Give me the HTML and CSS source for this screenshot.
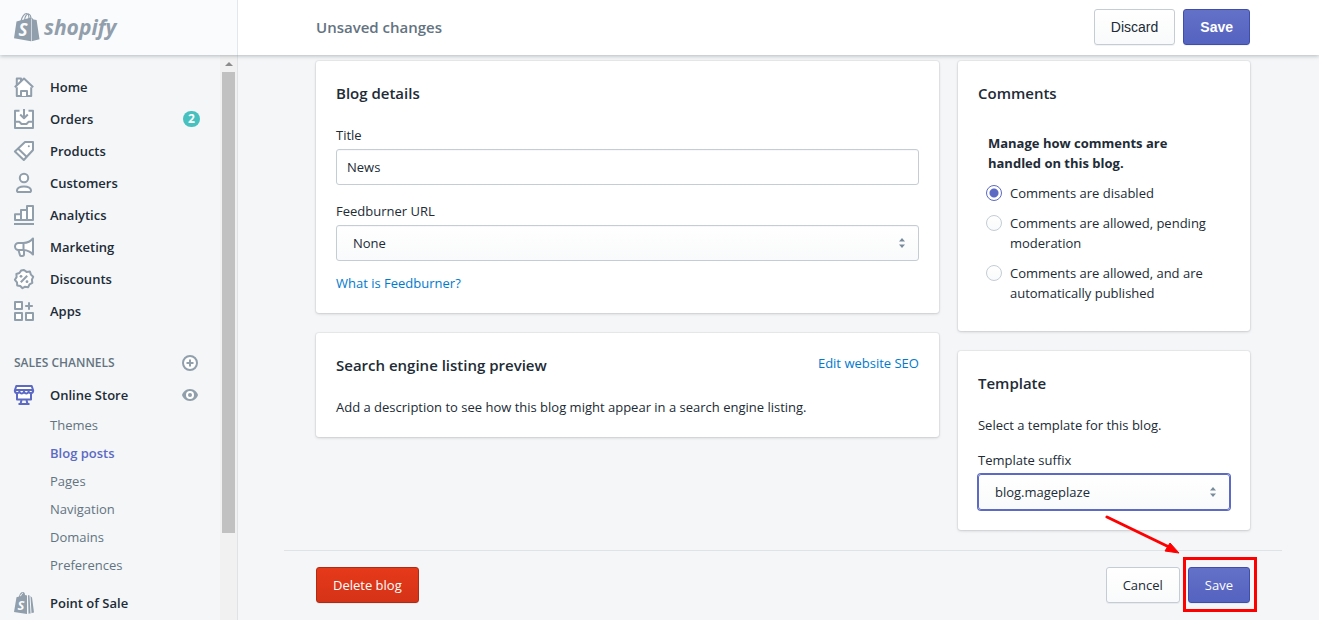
FILE: index.html
```html
<!DOCTYPE html>
<html lang="en">
<head>
<meta charset="utf-8">
<meta name="viewport" content="width=device-width, initial-scale=1">
<title>News - Blog</title>
<link rel="stylesheet" href="styles.css">
</head>
<body>
<div class="frame">
  <header class="topbar">
    <a class="brand" href="#" aria-label="Shopify">
      <svg class="brand-mark" viewBox="0 0 26 30" aria-hidden="true">
        <path d="M7 9C8 4.500 10.500 1.500 12.500 1.500S15 4 15 7.500M10.500 8C11 4 13 1.500 14.500 2S17 4.500 17 7" fill="none" stroke="#919eab" stroke-width="1.100"/>
        <path d="M2.500 9.500 17 5.500V29.300L0 26.200Z" fill="#919eab"/>
        <path d="M17.600 5.500 19.500 7.500 22.600 8 25.500 27.300 17.600 29.300Z" fill="#919eab"/>
        <text class="mark-letter" x="4.500" y="24">S</text>
      </svg>
      <span class="brand-name">shopify</span>
    </a>
    <div class="savebar">
      <h2 class="savebar-title">Unsaved changes</h2>
      <div class="savebar-actions">
        <button class="btn btn-top" type="button">Discard</button>
        <button class="btn btn-top btn-primary btn-strong" type="button">Save</button>
      </div>
    </div>
  </header>

  <aside class="sidebar">
    <nav class="nav" aria-label="Main">
      <ul class="list">
        <li><a class="item" href="#"><svg class="icon" viewBox="0 0 20 20"><path class="s" d="M2.800 9V1.500H7V5M2.800 9V19H17.200V9"/><path class="s" d="M.8 10.200 10 1.500 19.200 10.200"/><path class="s" d="M7 19V14H13V19"/></svg>Home</a></li>
        <li><a class="item" href="#"><svg class="icon" viewBox="0 0 20 20"><path class="s" d="M5.500 1.800H1V19H19V1.800H14.500"/><path class="s" d="M1 12.800H5.500L7.500 15H12.500L14.500 12.800H19M10 0V9M6.200 5.600 10 9.200 13.800 5.600"/></svg>Orders<span class="badge">2</span></a></li>
        <li><a class="item" href="#"><svg class="icon" viewBox="0 0 20 20"><path class="s" d="M11 1H19V9L9.800 19 .9 10.500Z"/><path class="s" d="M4 7.500 12.600 15.800"/><circle cx="14.800" cy="5.200" r="1" fill="#919eab"/></svg>Products</a></li>
        <li><a class="item" href="#"><svg class="icon" viewBox="0 0 20 20"><circle class="s" cx="10" cy="5" r="4.200"/><path class="s" d="M4.500 19C3.400 19 2.800 18.300 3 17.200 3.500 14.500 6.800 13.500 10 13.500S16.500 14.500 17 17.200C17.200 18.300 16.600 19 15.500 19Z"/></svg>Customers</a></li>
        <li><a class="item" href="#"><svg class="icon" viewBox="0 0 20 20"><path class="s" d="M1 15V9.200H7V15ZM7 15V5H13V15ZM13 15V1H19V15Z"/><path class="s" d="M0 19H20"/></svg>Analytics</a></li>
        <li><a class="item" href="#"><svg class="icon" viewBox="0 0 20 20"><path class="s" d="M4 11.500 6 18.200C6.300 19.400 10 19.400 10 17.500V11.500Z"/><path class="s" d="M9.500 6H4.500A3.500 3.500 0 0 0 4.500 13H9.500C13.500 13.200 16.500 14.500 19 17.500V1.500C16.500 4.500 13.500 5.800 9.500 6ZM9.500 6V13"/></svg>Marketing</a></li>
        <li><a class="item" href="#"><svg class="icon" viewBox="0 0 20 20"><path class="s" d="M10 1 12.500 2.900 15.900 2.500 16.900 5.600 19.200 7.800 17.900 10.700 18.300 13.800 15.500 15.300 14.200 18.200 11.100 17.700 8.500 19.200 6.300 17 3.200 16.400 3 13.300.9 10.800 2.600 8.100 2.400 5 5.400 4 7.100 1.600Z"/><path class="s" d="M6.800 13.200 13.200 6.800"/><circle cx="7" cy="7.300" r="1.400" fill="#919eab"/><circle cx="13" cy="12.700" r="1.400" fill="#919eab"/></svg>Discounts</a></li>
        <li><a class="item" href="#"><svg class="icon" viewBox="0 0 20 20"><path class="s" d="M1 1H8V8H1ZM1 12H8V19H1ZM12 12H19V19H12Z"/><path class="s" d="M15 1.200V8.800M11.200 5H18.800"/></svg>Apps</a></li>
      </ul>

      <div class="group-head">
        <h3 class="group-title">SALES CHANNELS</h3>
        <button class="icon-btn" type="button" aria-label="Add sales channel"><svg class="icon-small" viewBox="0 0 16 16"><circle class="s" cx="8" cy="8" r="7"/><path class="s" d="M8 4.500V11.500M4.500 8H11.500"/></svg></button>
      </div>

      <div class="row">
        <a class="item" href="#"><svg class="icon" viewBox="0 0 20 20"><g class="active"><path class="s" d="M3 7V14.500H17V7"/><path class="s" d="M2.300 1H17.700L19.200 5.500C19.200 8.500 15.500 9 14.600 6.500 13.500 9.300 11 9.300 10 6.500 9 9.300 6.500 9.300 5.400 6.500 4.500 9 .8 8.500.8 5.500Z"/><path class="s" d="M1 5H19M7.500 15 6.500 19M12.500 15 13.500 19M4.500 19H15.500"/></g></svg>Online Store</a>
        <button class="icon-btn" type="button" aria-label="View your online store"><svg class="icon-small" viewBox="0 0 16 16"><path fill="#919eab" d="M8 2C3.500 2 .8 5.500 0 8 .8 10.500 3.500 14 8 14S15.200 10.500 16 8C15.200 5.500 12.500 2 8 2Z"/><circle cx="8" cy="8" r="4" fill="#fff"/><circle cx="8" cy="8" r="2" fill="#919eab"/></svg></button>
      </div>
      <ul class="list">
        <li><a class="sub" href="#">Themes</a></li>
        <li><a class="sub sub-current" href="#" aria-current="page">Blog posts</a></li>
        <li><a class="sub" href="#">Pages</a></li>
        <li><a class="sub" href="#">Navigation</a></li>
        <li><a class="sub" href="#">Domains</a></li>
        <li><a class="sub" href="#">Preferences</a></li>
      </ul>
      <a class="item item-spaced" href="#"><svg class="icon icon-tall" viewBox="0 0 20 22"><path fill="#919eab" d="M2.500 5.200 5 4.500C5.500 2 7 0 8.800 0S11 1.500 11 3L13 3.500V22L0 20ZM14 3 16.200 4 18 5.500 20 20.500 14.500 21.800Z"/><path d="M6.500 4.200C7 2.500 8 1.200 9 1.200" stroke="#f4f6f8" fill="none"/><path d="M16 4 17 21" stroke="#f4f6f8" fill="none"/><text class="mark-letter mark-letter-small" x="3.500" y="17.500">S</text></svg>Point of Sale</a>
    </nav>
    <div class="scroll" aria-hidden="true">
      <span class="scroll-arrow"></span>
      <span class="scroll-thumb"></span>
    </div>
  </aside>

  <main class="main">
    <form class="columns">
      <div class="stack">
        <section class="card">
          <h2 class="card-title">Blog details</h2>
          <div class="field">
            <label for="title">Title</label>
            <input class="control" id="title" type="text" value="News">
          </div>
          <div class="field">
            <label for="feed">Feedburner URL</label>
            <div class="picker">
              <select class="control control-select" id="feed"><option>None</option></select>
              <svg class="carets" viewBox="0 0 6 10" aria-hidden="true"><path d="M0 3.600 3 0 6 3.600ZM0 6.400H6L3 10Z"/></svg>
            </div>
          </div>
          <a class="link help" href="#">What is Feedburner?</a>
        </section>
        <section class="card">
          <div class="card-head">
            <h2 class="card-title">Search engine listing preview</h2>
            <a class="link" href="#">Edit website SEO</a>
          </div>
          <p class="text">Add a description to see how this blog might appear in a search engine listing.</p>
        </section>
      </div>
      <div class="stack">
        <section class="card card-comments">
          <h2 class="card-title">Comments</h2>
          <fieldset class="choices">
            <legend class="legend">Manage how comments are handled on this blog.</legend>
            <label class="choice"><input class="radio" type="radio" name="comments" checked><span>Comments are disabled</span></label>
            <label class="choice"><input class="radio" type="radio" name="comments"><span>Comments are allowed, pending moderation</span></label>
            <label class="choice"><input class="radio" type="radio" name="comments"><span>Comments are allowed, and are automatically published</span></label>
          </fieldset>
        </section>
        <section class="card">
          <h2 class="card-title">Template</h2>
          <p class="text">Select a template for this blog.</p>
          <div class="field">
            <label for="suffix">Template suffix</label>
            <div class="picker">
              <select class="control control-select control-focus" id="suffix"><option>blog.mageplaze</option></select>
              <svg class="carets" viewBox="0 0 6 10" aria-hidden="true"><path d="M0 3.600 3 0 6 3.600ZM0 6.400H6L3 10Z"/></svg>
            </div>
          </div>
        </section>
      </div>
    </form>
    <div class="footer">
      <button class="btn btn-danger" type="button">Delete blog</button>
      <div class="footer-end">
        <button class="btn" type="button">Cancel</button>
        <div class="marked">
          <button class="btn btn-primary" type="button">Save</button>
          <svg class="pointer" viewBox="0 0 76 40" aria-hidden="true"><path d="M2 2 64 32" stroke="red" stroke-width="3" stroke-linecap="round"/><path d="M65 28 74 38 60 36Z" fill="red" stroke="red"/></svg>
        </div>
      </div>
    </div>
  </main>
</div>
</body>
</html>
```
FILE: styles.css
```css
* { box-sizing: border-box; }

body {
  margin: 0;
  background: #f4f6f8;
  color: #212b36;
  font: 13px/20px "Open Sans", "Noto Sans", sans-serif;
}

h2, h3, p, ul, fieldset, legend { margin: 0; padding: 0; border: 0; }
a { color: inherit; text-decoration: none; }
button, input, select { font: inherit; color: inherit; margin: 0; }

.frame {
  display: grid;
  grid-template: 55px minmax(0, 1fr) / 238px minmax(0, 1fr);
  height: 100vh;
  overflow: hidden;
}

.topbar {
  grid-column: 1 / -1;
  display: grid;
  grid-template-columns: subgrid;
  background: #fff;
  box-shadow: 0 1px 4px rgba(33, 43, 54, .3);
  z-index: 1;
}

.brand {
  display: flex;
  align-items: center;
  gap: 4px;
  padding: 0 0 2px 14px;
  background: #fafbfc;
  border-right: 1px solid #e3e7eb;
  color: #919eab;
}
.brand-mark { width: 26px; height: 30px; }
.mark-letter { fill: #fafbfc; font: italic 700 17px "Open Sans", sans-serif; }
.mark-letter-small { font-size: 13px; }
.brand-name { font-size: 21px; line-height: 28px; font-weight: 700; font-style: italic; }

.savebar {
  display: flex;
  align-items: center;
  justify-content: space-between;
  padding: 0 69px 2px 78px;
}
.savebar-title { font-size: 15px; font-weight: 600; color: #637381; }
.savebar-actions, .footer-end { display: flex; gap: 8px; }

.btn {
  height: 36px;
  padding: 0 16px;
  border: 1px solid #c4cdd5;
  border-radius: 3px;
  background: linear-gradient(#fff, #f9fafb);
  box-shadow: 0 1px 0 rgba(22, 29, 37, .05);
}
.btn-top { font-family: "Liberation Sans", sans-serif; font-size: 14px; }
.btn-primary { border-color: #3f4eae; background: linear-gradient(#6371c7, #5563c1); color: #fff; }
.btn-danger { border-color: #b02a14; background: linear-gradient(#e6391a, #d53317); color: #fff; }
.btn-strong { font-weight: 700; }

.sidebar {
  display: grid;
  grid-template-columns: minmax(0, 1fr) 17px;
  min-height: 0;
  overflow: hidden;
  border-right: 1px solid #dfe3e8;
}
.nav { padding-top: 16px; }
.list { list-style: none; }
.item {
  display: flex;
  align-items: center;
  gap: 16px;
  height: 32px;
  padding: 0 20px 0 14px;
  font-weight: 600;
}
.item-spaced { margin-top: 8px; }
.icon { width: 20px; height: 20px; overflow: visible; flex: none; }
.icon-tall { height: 22px; }
.icon-small { display: block; width: 16px; height: 16px; }
.s { fill: #fff; stroke: #919eab; stroke-width: 2; stroke-linejoin: round; stroke-linecap: butt; }
.active .s { stroke: #5c6ac4; }
.badge {
  margin-left: auto;
  width: 17px;
  height: 16px;
  border-radius: 8px;
  background: #47c1bf;
  color: #fff;
  font-size: 12px;
  line-height: 16px;
  font-weight: 700;
  text-align: center;
}
.group-head, .row { display: flex; align-items: center; justify-content: space-between; padding-right: 22px; height: 32px; }
.group-head { margin-top: 20px; padding-left: 14px; }
.group-title { font-size: 12px; font-weight: 600; color: #637381; }
.icon-btn { padding: 0; border: 0; background: none; }
.sub { display: block; padding-left: 50px; line-height: 28px; color: #637381; }
.sub-current { color: #5c6ac4; font-weight: 600; }

.scroll { display: flex; flex-direction: column; align-items: center; background: #f1f1f1; }
.scroll-arrow { height: 17px; display: flex; align-items: center; }
.scroll-arrow::before { content: ""; border: 4px solid transparent; border-top: 0; border-bottom: 4px solid #8c8c8c; }
.scroll-thumb { width: 13px; height: 84%; margin-bottom: auto; flex: 0 1 461px; background: #c1c1c1; }

.main { padding: 6px 37px 0 46px; min-width: 0; }
.columns { display: grid; grid-template-columns: 32fr 15fr; gap: 19px; padding: 0 32px; }
.stack { display: flex; flex-direction: column; gap: 20px; min-width: 0; }
.card {
  padding: 20px;
  background: #fff;
  border-radius: 3px;
  box-shadow: 0 0 0 1px rgba(63, 63, 68, .05), 0 1px 3px rgba(63, 63, 68, .2);
}
.card-title { font-size: 15px; line-height: 24px; font-weight: 600; margin-bottom: 20px; }
.card-head { display: flex; justify-content: space-between; }
.link { color: #007ace; }
.field { margin-bottom: 16px; }
.field label { display: block; margin-bottom: 4px; }
.field:last-child { margin-bottom: 0; }
.text + .field { margin-top: 15px; }
.help { display: block; margin-top: -4px; }
.control {
  display: block;
  width: 100%;
  height: 36px;
  padding: 0 10px;
  border: 1px solid #c4cdd5;
  border-radius: 3px;
  background: #fff;
  box-shadow: inset 0 1px 0 rgba(99, 115, 129, .05);
}
.control-select { appearance: none; padding: 0 16px; background: linear-gradient(#fff, #f9fafb); }
.control-focus { border-color: #5c6ac4; box-shadow: 0 0 0 1px #5c6ac4; }
.picker { position: relative; }
.carets { position: absolute; right: 14px; top: 13px; width: 6px; height: 10px; fill: #798c9c; pointer-events: none; }

.card-comments { padding-bottom: 28px; }
.choices { margin-top: 28px; padding: 0 8px; display: flex; flex-direction: column; gap: 10px; }
.legend { padding: 0 2px 10px; font-weight: 700; }
.choice { display: flex; gap: 8px; }
.radio {
  appearance: none;
  flex: none;
  width: 16px;
  height: 16px;
  margin-top: 2px;
  border: 1px solid #c4cdd5;
  border-radius: 50%;
  background: linear-gradient(#fff, #f9fafb);
}
.radio:checked { border-color: #5c6ac4; background: radial-gradient(circle, #5c6ac4 4px, #fff 5px); }

.footer {
  display: flex;
  justify-content: space-between;
  margin-top: 20px;
  padding: 16px 32px;
  border-top: 1px solid #dfe3e8;
}
.marked { position: relative; }
.marked::after { content: ""; position: absolute; inset: -10px -7px -9px -5px; border: 3px solid red; }
.pointer { position: absolute; width: 76px; height: 40px; right: 69px; bottom: 48px; fill: none; }
```
